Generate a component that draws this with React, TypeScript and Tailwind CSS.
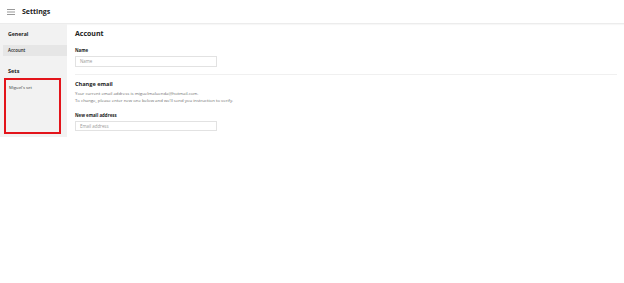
import React from "react";

export default function App() {
  return (
    <div className="w-[624px] h-[283px] bg-white text-[#222]" style={{ fontFamily: '"Open Sans", "Noto Sans", sans-serif' }}>
      <header className="h-[24px] flex items-center border-b border-[#ececec] shadow-[0_1px_1px_rgba(0,0,0,0.03)]">
        <svg width="8" height="6" viewBox="0 0 8 6" className="ml-[7px]">
          <rect x="0" y="0" width="8" height="1" fill="#9a9a9a" />
          <rect x="0" y="2.5" width="8" height="1" fill="#9a9a9a" />
          <rect x="0" y="5" width="8" height="1" fill="#9a9a9a" />
        </svg>
        <span className="ml-[7px] text-[7px] font-bold leading-none">Settings</span>
      </header>
      <div className="flex">
        <aside className="w-[67px] h-[113px] bg-[#f2f2f2] flex flex-col">
          <div className="mt-[6px] ml-[8px] text-[5.2px] font-bold leading-[8px]">General</div>
          <div className="mt-[7px] ml-[3px] h-[11px] bg-[#e6e6e6] flex items-center pl-[5px] text-[4.4px] font-semibold">Account</div>
          <div className="mt-[11px] ml-[8px] text-[5.5px] font-bold leading-[8px]">Sets</div>
          <div className="mt-[3px] ml-[4px] w-[57px] h-[56px] border-2 border-[#e3141b] pt-[5px] pl-[3px] text-[4.2px] text-[#444]">Miguel's set</div>
        </aside>
        <main className="flex-1 pl-[8px] pr-[7px]">
          <div className="mt-[5px] text-[7px] font-bold leading-[10px]">Account</div>
          <div className="mt-[8px] text-[4.4px] font-bold leading-[6px]">Name</div>
          <div className="mt-[3px] w-[142px] h-[11px] border border-[#e2e2e2] flex items-center pl-[4px] text-[4.4px] text-[#999]">Name</div>
          <div className="mt-[7px] border-t border-[#f0f0f0]" />
          <div className="mt-[5px] text-[5.6px] font-bold leading-[8px]">Change email</div>
          <div className="mt-[1.5px] text-[4.3px] text-[#707070] leading-[7px]">Your current email address is miguelmaluenda@hotmail.com.</div>
          <div className="text-[4.3px] text-[#707070] leading-[7px]">To change, please enter new one below and we'll send you instruction to verify.</div>
          <div className="mt-[8.5px] text-[4.4px] font-bold leading-[6px]">New email address</div>
          <div className="mt-[3px] w-[142px] h-[10px] border border-[#e2e2e2] flex items-center pl-[4px] text-[4.4px] text-[#999]">Email address</div>
        </main>
      </div>
    </div>
  );
}
